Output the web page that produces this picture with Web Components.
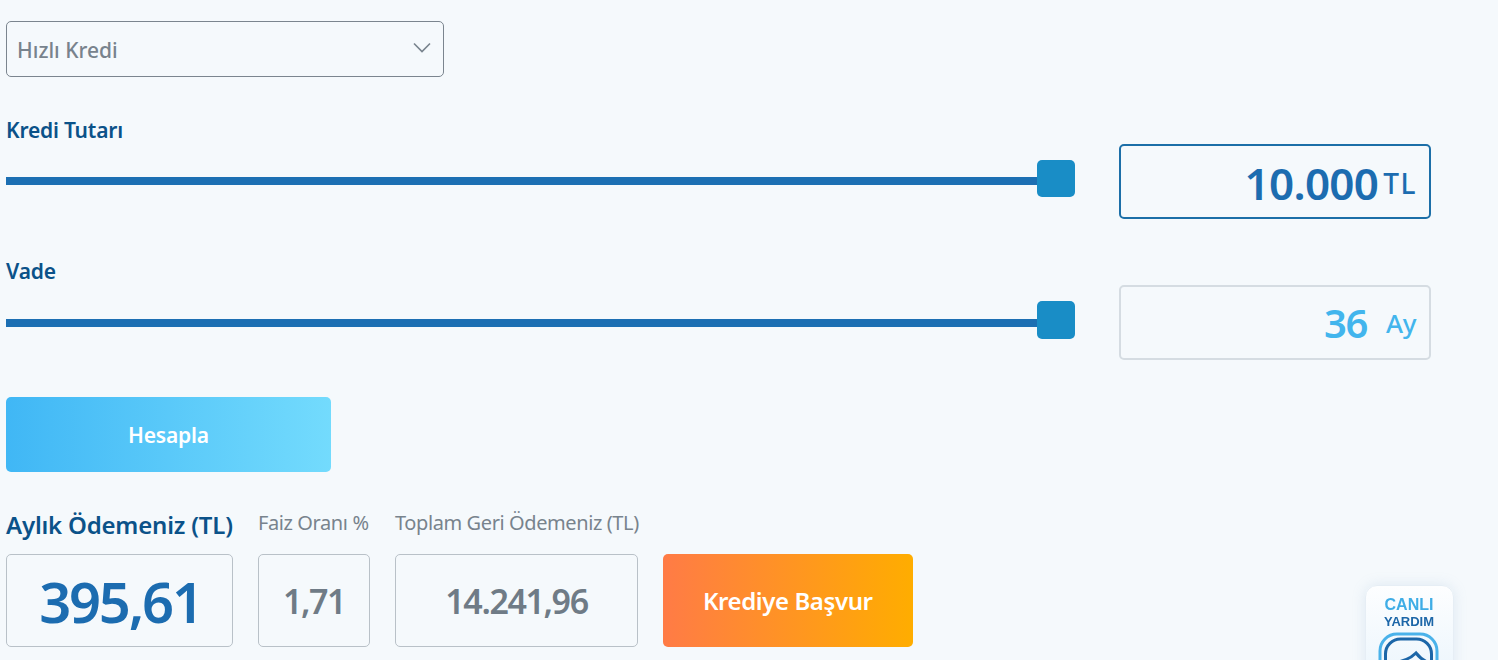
<!DOCTYPE html>
<html lang="tr">
<head>
<meta charset="utf-8">
<title>Kredi Hesaplama</title>
<style>
    html, body { height: 100%; }
    body {
        margin: 0;
        background: #f5f9fc;
        overflow: hidden;
        font-family: "Noto Sans", "Open Sans", sans-serif;
    }
</style>
</head>
<body>
<credit-calculator>
    <loan-select slot="select">Hızlı Kredi</loan-select>
    <loan-slider slot="sliders" label="Kredi Tutarı" value="10.000" unit="TL" active></loan-slider>
    <loan-slider slot="sliders" label="Vade" value="36" unit="Ay"></loan-slider>
    <gradient-button slot="calc" kind="blue">Hesapla</gradient-button>
    <result-box slot="results" label="Aylık Ödemeniz (TL)" value="395,61" main></result-box>
    <result-box slot="results" label="Faiz Oranı %" value="1,71" w="112"></result-box>
    <result-box slot="results" label="Toplam Geri Ödemeniz (TL)" value="14.241,96" w="243"></result-box>
    <gradient-button slot="results" kind="orange">Krediye Başvur</gradient-button>
</credit-calculator>
<live-help></live-help>

<script>
class CreditCalculator extends HTMLElement {
    constructor() {
        super()
        this.attachShadow({mode: "open"}).innerHTML = `
        <style>
            :host { display: block; padding: 21px 0 0 6px; }
            .sliders { display: flex; flex-direction: column; gap: 43px; margin-top: 44px; }
            .calc { margin-top: 37px; }
            .results { display: flex; align-items: flex-end; gap: 25px; margin-top: 38px; }
        </style>
        <slot name="select"></slot>
        <div class="sliders"><slot name="sliders"></slot></div>
        <div class="calc"><slot name="calc"></slot></div>
        <div class="results"><slot name="results"></slot></div>`
    }
}

class LoanSelect extends HTMLElement {
    constructor() {
        super()
        this.attachShadow({mode: "open"}).innerHTML = `
        <style>
            :host {
                display: flex;
                align-items: center;
                justify-content: space-between;
                box-sizing: border-box;
                width: 438px;
                height: 56px;
                padding: 2px 12px 0 10px;
                border: 1px solid #7b858f;
                border-radius: 5px;
                color: #78838d;
                font-size: 21px;
                font-weight: 500;
            }
            svg { display: block; margin-bottom: 6px; }
        </style>
        <span><slot></slot></span>
        <svg width="18" height="11" viewBox="0 0 18 11" fill="none" stroke="#78838d" stroke-width="1.6">
            <path d="M1 1.5l8 8 8-8"/>
        </svg>`
    }
}

class LoanSlider extends HTMLElement {
    constructor() {
        super()
        this.attachShadow({mode: "open"}).innerHTML = `
        <style>
            :host { display: block; }
            .label {
                height: 23px;
                color: #0b5289;
                font-size: 21px;
                font-weight: 600;
                line-height: 18px;
                letter-spacing: -0.2px;
            }
            .row { display: flex; align-items: flex-start; gap: 44px; }
            .track { position: relative; width: 1069px; height: 75px; }
            .track::before {
                content: "";
                position: absolute;
                left: 0; right: 4px; top: 34px;
                height: 8px;
                background: #1c6fb3;
            }
            .thumb {
                position: absolute;
                right: 0; top: 16px;
                width: 38px; height: 38px;
                background: #198dc6;
                border-radius: 5px;
            }
            .box {
                box-sizing: border-box;
                display: flex;
                align-items: center;
                justify-content: flex-end;
                width: 312px;
                height: 75px;
                padding: 0 13px 0 0;
                border: 2px solid #d5dce2;
                border-radius: 5px;
                color: #42b5ed;
            }
            .num { font-size: 40px; font-weight: 600; letter-spacing: -1.4px; line-height: 1; }
            .unit { font-size: 26px; font-weight: 500; margin-left: 19px; letter-spacing: -0.4px; }
            :host([active]) .track::before { top: 33px; }
            :host([active]) .thumb { height: 37px; }
            :host([active]) .box { border-color: #1c6fa8; color: #1c6cb0; padding: 3px 12px 0 0; }
            :host([active]) .num { font-size: 44px; letter-spacing: -0.7px; }
            :host([active]) .unit { font-size: 28px; margin-left: 5px; letter-spacing: 1.5px; }
        </style>
        <div class="label"></div>
        <div class="row">
            <div class="track"><div class="thumb"></div></div>
            <div class="box"><span class="num"></span><span class="unit"></span></div>
        </div>`
    }

    connectedCallback() {
        this.shadowRoot.querySelector(".label").textContent = this.getAttribute("label")
        this.shadowRoot.querySelector(".num").textContent = this.getAttribute("value")
        this.shadowRoot.querySelector(".unit").textContent = this.getAttribute("unit")
    }
}

class GradientButton extends HTMLElement {
    constructor() {
        super()
        this.attachShadow({mode: "open"}).innerHTML = `
        <style>
            :host {
                display: flex;
                align-items: center;
                justify-content: center;
                box-sizing: border-box;
                border-radius: 5px;
                color: #fff;
                font-weight: 600;
            }
            :host([kind="blue"]) {
                width: 325px; height: 75px;
                font-size: 21px;
                letter-spacing: -0.2px;
                background: linear-gradient(90deg, #40b7f5, #73dbfd);
            }
            :host([kind="orange"]) {
                width: 250px; height: 93px;
                margin-left: -1px;
                font-size: 24px;
                letter-spacing: -0.4px;
                background: linear-gradient(90deg, #ff7b46, #ffad00);
            }
        </style>
        <slot></slot>`
    }
}

class ResultBox extends HTMLElement {
    constructor() {
        super()
        this.attachShadow({mode: "open"}).innerHTML = `
        <style>
            :host { display: block; }
            .label {
                height: 44px;
                color: #78838d;
                font-size: 20px;
                white-space: nowrap;
                letter-spacing: -0.4px;
                line-height: 26px;
            }
            .value {
                box-sizing: border-box;
                display: flex;
                align-items: center;
                justify-content: center;
                height: 93px;
                border: 1px solid #b9c1c8;
                border-radius: 5px;
                color: #6f7b86;
                font-size: 34px;
                font-weight: 600;
                letter-spacing: -1.4px;
            }
            :host([main]) .label {
                color: #0b5289;
                font-size: 24px;
                font-weight: 600;
                letter-spacing: -0.2px;
                line-height: 30px;
            }
            :host([main]) .value {
                width: 227px;
                padding-left: 2px;
                color: #1c6cb0;
                font-size: 56px;
                font-weight: 600;
                letter-spacing: -2.2px;
            }
        </style>
        <div class="label"></div>
        <div class="value"></div>`
    }

    connectedCallback() {
        this.shadowRoot.querySelector(".label").textContent = this.getAttribute("label")
        const value = this.shadowRoot.querySelector(".value")
        value.textContent = this.getAttribute("value")
        if (this.hasAttribute("w")) { value.style.width = this.getAttribute("w") + "px" }
    }
}

class LiveHelp extends HTMLElement {
    constructor() {
        super()
        this.attachShadow({mode: "open"}).innerHTML = `
        <style>
            :host {
                position: fixed;
                left: 1365px; top: 585px;
                width: 89px; height: 110px;
                box-sizing: border-box;
                padding: 10px 1px 0 0;
                background: linear-gradient(180deg, #fdfeff, #e9f4fc);
                border: 1px solid #e6eef5;
                border-radius: 12px;
                box-shadow: 0 0 14px rgba(120, 160, 200, .18);
                text-align: center;
                font-family: "Liberation Sans", sans-serif;
                font-weight: 700;
            }
            .a { color: #3fade6; font-size: 16px; line-height: 17px; }
            .b { color: #1c66a8; font-size: 13px; line-height: 17px; }
            svg { display: block; margin: 2px 0 0 12px; }
        </style>
        <div class="a">CANLI</div>
        <div class="b">YARDIM</div>
        <svg width="62" height="62" viewBox="0 0 62 62" fill="none">
            <rect x="2" y="2" width="57" height="57" rx="17" stroke="#4ab2ea" stroke-width="3"/>
            <rect x="7.5" y="7" width="46" height="46" rx="15" stroke="#1c66a8" stroke-width="3"/>
            <path d="M14 31c9-1 18-4 24-10 3 4 7 7 11 9" stroke="#1c66a8" stroke-width="3"/>
        </svg>`
    }
}

customElements.define("credit-calculator", CreditCalculator)
customElements.define("loan-select", LoanSelect)
customElements.define("loan-slider", LoanSlider)
customElements.define("gradient-button", GradientButton)
customElements.define("result-box", ResultBox)
customElements.define("live-help", LiveHelp)
</script>
</body>
</html>
